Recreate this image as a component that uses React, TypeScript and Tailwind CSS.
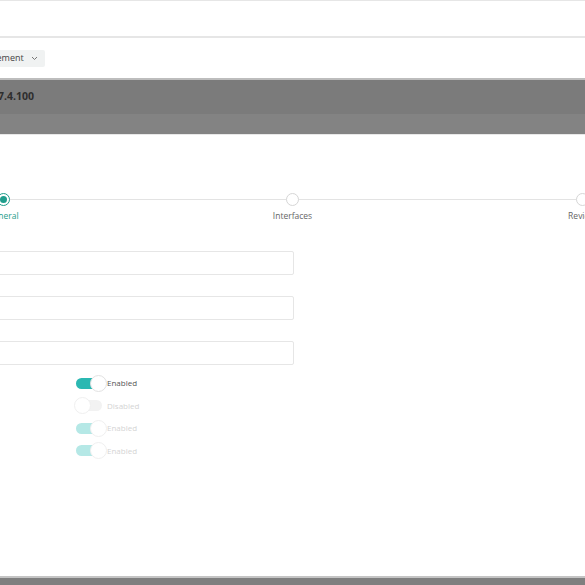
import React from 'react';

// Wizard page, scrolled so its left edge sits off-screen
const font = { fontFamily: '"Open Sans", "Liberation Sans", sans-serif' };

type ToggleProps = { on: boolean; label: string; muted?: boolean };

function Toggle({ on, label, muted }: ToggleProps) {
  const track = !on ? 'bg-[#f2f2f2]' : muted ? 'bg-[#b5e8e6]' : 'bg-[#2bb8b2]';
  return (
    <div className="flex h-[22.5px] items-center">
      <div className={`relative h-[11px] w-[26px] rounded-full ${track}`}>
        <div
          className={`absolute top-[-3px] h-[17px] w-[17px] rounded-full bg-white ${
            muted || !on ? 'border border-[#f0f0f0]' : 'border border-[#e2e2e2]'
          } ${on ? 'left-[14px]' : 'left-[-2px]'}`}
        />
      </div>
      <span className={`ml-[5px] text-[8px] ${muted || !on ? 'text-[#d4d4d4]' : 'text-[#555]'}`}>
        {label}
      </span>
    </div>
  );
}

function Step({ label, active }: { label: string; active?: boolean }) {
  return (
    <div className="flex w-[60px] flex-col items-center">
      <div
        className={`flex h-[13px] w-[13px] items-center justify-center rounded-full bg-white border ${
          active ? 'border-[#1f9e8c]' : 'border-[#d6d6d6]'
        }`}
      >
        {active && <div className="h-[7px] w-[7px] rounded-full bg-[#1f9e8c]" />}
      </div>
      <span className={`mt-[4px] text-[8.5px] leading-[12px] ${active ? 'text-[#1f9e8c]' : 'text-[#666]'}`}>
        {label}
      </span>
    </div>
  );
}

export default function App() {
  return (
    <div className="h-[585px] w-[585px] overflow-hidden bg-white" style={font}>
      {/* top header */}
      <div className="h-[38px] border-t border-b-2 border-[#e6e6e6] bg-white" />

      {/* toolbar */}
      <div className="flex h-[40px] items-center">
        <div className="-ml-[40px] flex h-[17px] items-center gap-[7px] rounded-[2px] bg-[#f0f2f2] pl-[8px] pr-[7px] text-[9px] text-[#444]">
          <span>Management</span>
          <svg width="7" height="5" viewBox="0 0 7 5" className="text-[#777]">
            <path d="M1 1l2.5 2.5L6 1" fill="none" stroke="currentColor" strokeWidth="1" />
          </svg>
        </div>
      </div>

      {/* dimmed page heading */}
      <div className="border-t-2 border-[#bdbdbd] bg-[#7b7b7b]">
        <div className="flex h-[34px] items-center">
          <span className="-ml-[2px] text-[10.5px] font-bold text-[#2e2e2e]">7.4.100</span>
        </div>
        <div className="h-[20px] bg-[#838383]" />
      </div>
      <div className="h-[1px] bg-[#e8e8e8]" />

      {/* stepper */}
      <div className="relative mt-[58px] -ml-[27px] w-[639px]">
        <div className="absolute left-[30px] right-[30px] top-[6px] h-[1px] bg-[#e3e3e3]" />
        <div className="relative flex justify-between">
          <Step label="General" active />
          <Step label="Interfaces" />
          <Step label="Review" />
        </div>
      </div>

      {/* fields */}
      <div className="mt-[29px] flex w-[294px] flex-col gap-[21px]">
        <div className="-ml-[4px] h-[24px] rounded-[2px] border border-[#e6e6e6]" />
        <div className="-ml-[4px] h-[24px] rounded-[2px] border border-[#e6e6e6]" />
        <div className="-ml-[4px] h-[24px] rounded-[2px] border border-[#e6e6e6]" />
      </div>

      {/* toggles */}
      <div className="ml-[76px] mt-[7px] flex flex-col">
        <Toggle on label="Enabled" />
        <Toggle on={false} label="Disabled" />
        <Toggle on muted label="Enabled" />
        <Toggle on muted label="Enabled" />
      </div>

      {/* dimmed footer */}
      <div className="mt-[114px] h-[10px] border-t-2 border-[#c4c4c4] bg-[#7f7f7f]" />
    </div>
  );
}
